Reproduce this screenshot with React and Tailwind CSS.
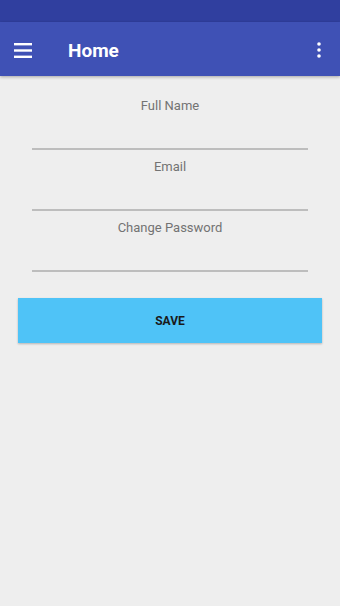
import React from "react";

export default function App() {
  return (
    <div className="w-[340px] h-[606px] bg-[#eeeeee] flex flex-col" style={{ fontFamily: "Roboto, 'Noto Sans', sans-serif" }}>
      <div className="h-[22px] bg-[#303f9f]" />
      <div className="h-[54px] pt-[3px] bg-[#3f51b5] flex items-center shadow-[0_1px_3px_rgba(0,0,0,0.3)]">
        <div className="w-[68px] pl-[14px] flex items-center">
          <svg width="18" height="15" viewBox="0 0 18 15">
            <rect x="0" y="0" width="18" height="2.4" fill="#fff" />
            <rect x="0" y="6.3" width="18" height="2.4" fill="#fff" />
            <rect x="0" y="12.6" width="18" height="2.4" fill="#fff" />
          </svg>
        </div>
        <div className="flex-1 text-white text-[19px] font-bold leading-none">Home</div>
        <div className="pr-[19px] flex items-center -mt-[2px]">
          <svg width="4" height="16" viewBox="0 0 4 16">
            <circle cx="2" cy="2" r="1.8" fill="#fff" />
            <circle cx="2" cy="8" r="1.8" fill="#fff" />
            <circle cx="2" cy="14" r="1.8" fill="#fff" />
          </svg>
        </div>
      </div>
      <div className="flex flex-col px-[32px] pt-[21px]">
        {["Full Name", "Email", "Change Password"].map((l) => (
          <div key={l} className="flex flex-col">
            <div className="text-[13px] text-[#737373] text-center leading-[17px]">{l}</div>
            <div className="h-[36px] border-b-2 border-[#bdbdbd] mb-[8px]" />
          </div>
        ))}
      </div>
      <div className="px-[18px] pt-[18px]">
        <div className="h-[45px] bg-[#4fc3f7] flex items-center justify-center shadow-[0_1px_2px_rgba(0,0,0,0.25)] text-[12px] font-bold text-[#1a1a1a]">SAVE</div>
      </div>
    </div>
  );
}
